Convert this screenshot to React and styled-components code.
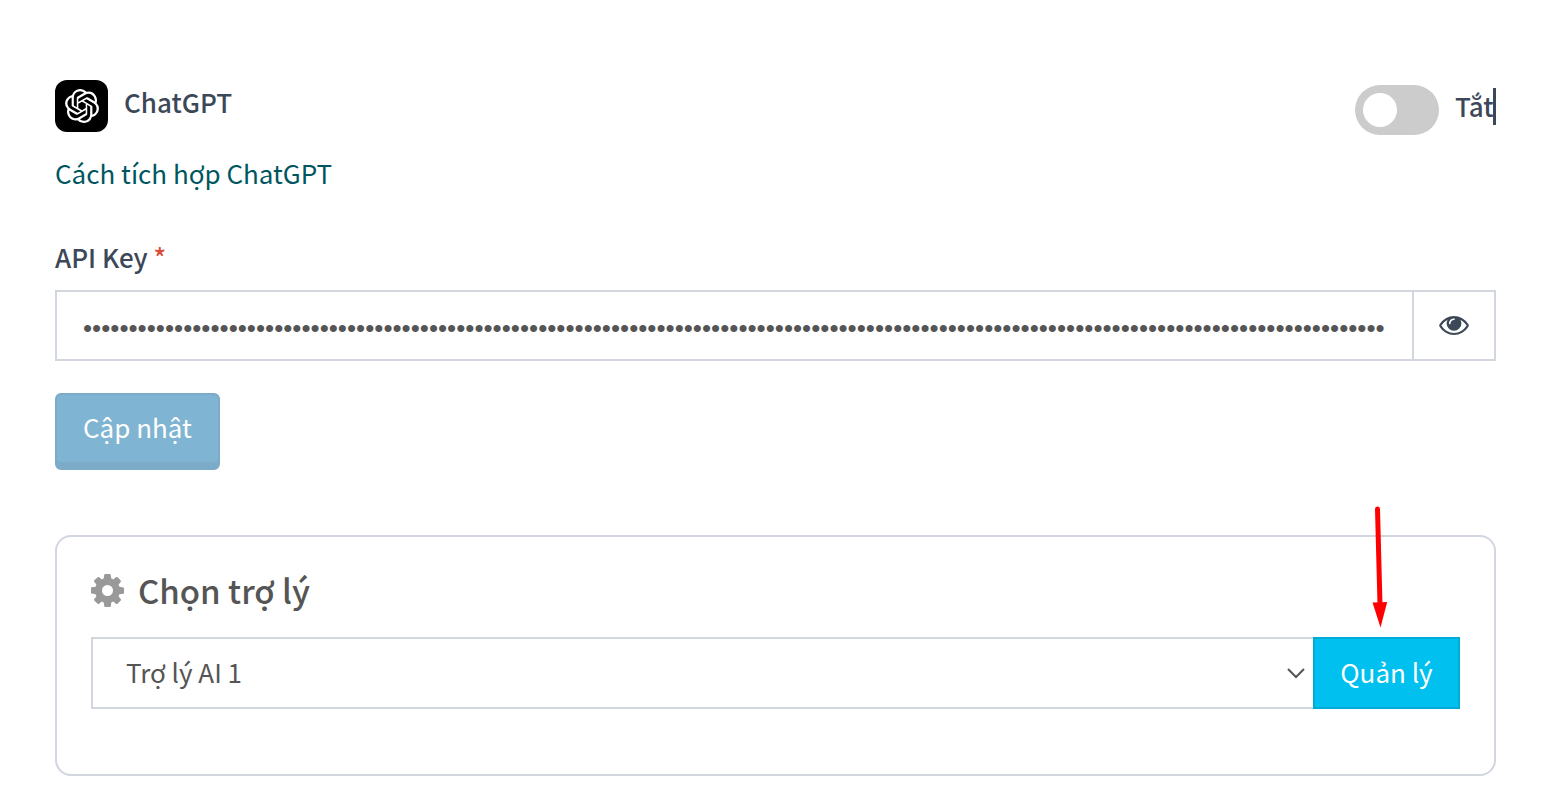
import React, { useState } from "react";
import styled, { createGlobalStyle } from "styled-components";
import { SiOpenai } from "react-icons/si";

const API_KEY = "x".repeat(143);

const App = () => {
  const [enabled, setEnabled] = useState(false);
  const [apiKey, setApiKey] = useState(API_KEY);
  const [visible, setVisible] = useState(false);
  const [assistant, setAssistant] = useState("1");

  return (
    <Container>
      <GlobalStyle />
      <Header>
        <Brand>
          <Logo>
            <SiOpenai size={34} />
          </Logo>
          <BrandName>ChatGPT</BrandName>
        </Brand>
        <Switch>
          <Toggle
            type="checkbox"
            checked={enabled}
            onChange={(e) => setEnabled(e.target.checked)}
          />
          <SwitchText>{enabled ? "Bật" : "Tắt"}</SwitchText>
        </Switch>
      </Header>

      <GuideLink href="#guide">Cách tích hợp ChatGPT</GuideLink>

      <Label htmlFor="api-key">
        API Key <Required>*</Required>
      </Label>
      <InputGroup>
        <KeyInput
          id="api-key"
          type={visible ? "text" : "password"}
          value={apiKey}
          onChange={(e) => setApiKey(e.target.value)}
        />
        <EyeButton
          type="button"
          aria-label="API Key"
          onClick={() => setVisible(!visible)}
        >
          <EyeIcon />
        </EyeButton>
      </InputGroup>
      <UpdateButton type="button">Cập nhật</UpdateButton>

      <Panel>
        <PanelTitle htmlFor="assistant">
          <GearIcon />
          Chọn trợ lý
        </PanelTitle>
        <AssistantRow>
          <SelectWrapper>
            <Select
              id="assistant"
              value={assistant}
              onChange={(e) => setAssistant(e.target.value)}
            >
              <option value="1">Trợ lý AI 1</option>
            </Select>
            <Chevron viewBox="0 0 18 12">
              <path d="M1 2l8 8 8-8" />
            </Chevron>
          </SelectWrapper>
          <ManageWrapper>
            <ManageButton type="button">Quản lý</ManageButton>
            <Arrow viewBox="0 0 16 124">
              <path d="M5.500 5L8 101" />
              <polygon points="0.500,98.500 15.200,98 8.500,123.500" />
            </Arrow>
          </ManageWrapper>
        </AssistantRow>
      </Panel>
    </Container>
  );
};

const EyeIcon = () => (
  <svg width="30" height="19" viewBox="0 384 1792 1152" fill="currentColor">
    <path d="M1664 960q-152-236-381-353 61 104 61 225 0 185-131.500 316.500t-316.500 131.500-316.500-131.500-131.500-316.500q0-121 61-225-229 117-381 353 133 205 333.500 326.500t434.500 121.500 434.500-121.500 333.500-326.500zm-720-384q0-20-14-34t-34-14q-125 0-214.500 89.500t-89.500 214.500q0 20 14 34t34 14 34-14 14-34q0-86 61-147t147-61q20 0 34-14t14-34zm848 384q0 34-20 69-140 230-376.500 368.500t-499.500 138.500-499.500-139-376.500-368q-20-35-20-69t20-69q140-229 376.500-368t499.500-139 499.500 139 376.500 368q20 35 20 69z" />
  </svg>
);

const GearIcon = () => (
  <svg width="33" height="33" viewBox="128 128 1536 1536" fill="#999">
    <path d="M1152 896q0-106-75-181t-181-75-181 75-75 181 75 181 181 75 181-75 75-181zm512-109v222q0 12-8 23t-20 13l-185 28q-19 54-39 91 35 50 107 138 10 12 10 25t-9 23q-27 37-99 108t-94 71q-12 0-26-9l-138-108q-44 23-91 38-16 136-29 186-7 28-36 28h-222q-14 0-24.500-8.500t-11.500-21.500l-28-184q-49-16-90-37l-141 107q-10 9-25 9-14 0-25-11-126-114-165-168-7-10-7-23 0-12 8-23 15-21 51-66.500t54-70.500q-27-50-41-99l-183-27q-13-2-21-12.500t-8-23.500v-222q0-12 8-23t19-13l186-28q14-46 39-92-40-57-107-138-10-12-10-24 0-10 9-23 26-36 98.500-107.500t94.500-71.500q13 0 26 10l138 107q44-23 91-38 16-136 29-186 7-28 36-28h222q14 0 24.500 8.500t11.500 21.500l28 184q49 16 90 37l142-107q9-9 24-9 13 0 25 10 129 119 165 170 7 8 7 22 0 12-8 23-15 21-51 66.500t-54 70.500q26 50 41 98l183 28q13 2 21 12.500t8 23.500z" />
  </svg>
);

const GlobalStyle = createGlobalStyle`
  * {
    box-sizing: border-box;
  }
  body {
    margin: 0;
    background: #fff;
    color: #555;
  }
  body, button, select {
    font-family: "Noto Sans CJK SC", "Noto Sans", sans-serif;
    font-size: 26px;
    line-height: 36px;
  }
`;

const Container = styled.div`
  display: flex;
  flex-direction: column;
  align-items: stretch;
  padding: 80px 52px 23px 55px;
`;
const Header = styled.div`
  display: flex;
  justify-content: space-between;
  min-height: 55px;
  margin-bottom: 20px;
`;
const Brand = styled.div`
  display: flex;
  align-items: flex-start;
  gap: 16px;
`;
const Logo = styled.div`
  display: flex;
  align-items: center;
  justify-content: center;
  width: 53px;
  height: 52px;
  border-radius: 12px;
  background: #000;
  color: #fff;
`;
const BrandName = styled.div`
  font-weight: 500;
  line-height: 44px;
  color: #3c4858;
`;
const Switch = styled.label`
  align-self: flex-end;
  display: flex;
  align-items: flex-start;
  gap: 16px;
  cursor: pointer;
`;
const Toggle = styled.input`
  appearance: none;
  width: 84px;
  height: 50px;
  margin: 0;
  padding: 8px;
  border-radius: 25px;
  background: ${(props) => (props.checked ? "#3c8dbc" : "#ccc")};
  cursor: pointer;
  &::before {
    content: "";
    display: block;
    width: 34px;
    height: 34px;
    margin-left: ${(props) => (props.checked ? "auto" : "0")};
    border-radius: 50%;
    background: #fff;
  }
`;
const SwitchText = styled.span`
  position: relative;
  min-width: 41px;
  font-weight: 500;
  line-height: 42px;
  color: #3c4858;
  /* text cursor */
  &::after {
    content: "";
    position: absolute;
    top: 3px;
    right: 0;
    width: 3px;
    height: 37px;
    background: #3c4858;
  }
`;
const GuideLink = styled.a`
  align-self: flex-start;
  margin-bottom: 48px;
  color: #00565f;
  text-decoration: none;
`;
const Label = styled.label`
  align-self: flex-start;
  margin-bottom: 15px;
  font-weight: 500;
  color: #3c4858;
`;
const Required = styled.span`
  color: #dd4b39;
`;
const InputGroup = styled.div`
  display: flex;
  height: 71px;
  margin-bottom: 32px;
`;
const KeyInput = styled.input`
  flex: 1;
  min-width: 0;
  padding: 6px 24px 0 26px;
  border: 2px solid #d2d6de;
  border-right: 0;
  border-radius: 0;
  background: #fff;
  font-family: "Liberation Sans", sans-serif;
  font-size: 26px;
  color: #555;
  outline: none;
`;
const EyeButton = styled.button`
  display: flex;
  align-items: center;
  justify-content: center;
  width: 84px;
  padding: 0;
  border: 2px solid #d2d6de;
  background: #fff;
  color: #3c4858;
  cursor: pointer;
`;
const UpdateButton = styled.button`
  align-self: flex-start;
  height: 77px;
  margin-bottom: 65px;
  padding: 0 26px 10px;
  border: 2px solid #7cabc8;
  border-radius: 6px;
  box-shadow: inset 0 -6px 0 #7cabc8;
  background: #80b4d3;
  color: #fff;
  cursor: pointer;
`;
const Panel = styled.div`
  padding: 29px 34px 65px;
  border: 2px solid #d2d6de;
  border-radius: 16px;
`;
const PanelTitle = styled.label`
  display: flex;
  align-items: center;
  gap: 14px;
  margin-bottom: 23px;
  font-weight: 500;
  font-size: 33px;
  line-height: 48px;
`;
const AssistantRow = styled.div`
  display: flex;
  height: 72px;
`;
const SelectWrapper = styled.div`
  position: relative;
  flex: 1;
  display: flex;
`;
const Select = styled.select`
  appearance: none;
  flex: 1;
  padding: 0 33px 2px;
  border: 2px solid #d2d6de;
  border-right: 0;
  border-radius: 0;
  background: #fff;
  color: #555;
`;
const Chevron = styled.svg`
  position: absolute;
  right: 8px;
  top: 30px;
  width: 18px;
  height: 12px;
  fill: none;
  stroke: #555;
  stroke-width: 2;
  pointer-events: none;
`;
const ManageWrapper = styled.div`
  position: relative;
  display: flex;
`;
const ManageButton = styled.button`
  min-width: 147px;
  padding: 0 25px 2px;
  border: 2px solid #00acd6;
  background: #00c0ef;
  color: #fff;
  cursor: pointer;
`;
const Arrow = styled.svg`
  position: absolute;
  right: 72px;
  bottom: 81px;
  width: 16px;
  height: 124px;
  fill: #f00;
  pointer-events: none;
  path {
    stroke: #f00;
    stroke-width: 5;
    stroke-linecap: round;
  }
`;

export default App;
